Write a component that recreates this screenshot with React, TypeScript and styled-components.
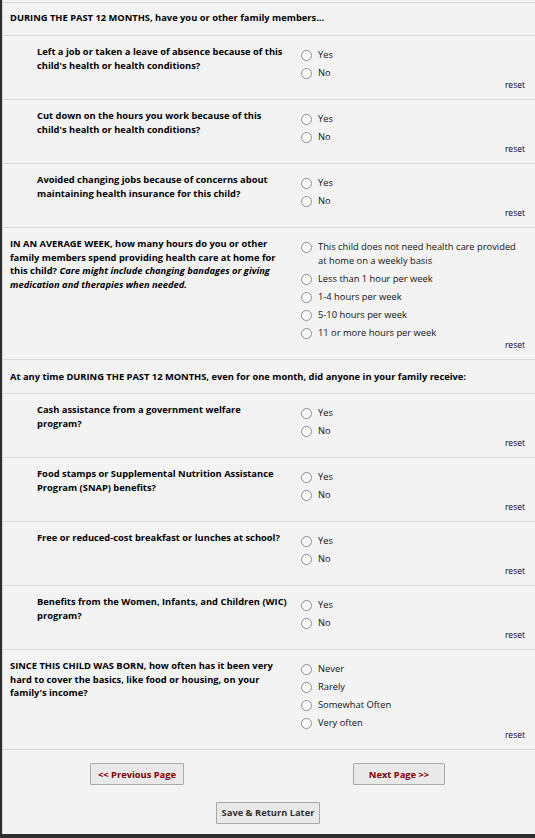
import React from "react"
import styled, { createGlobalStyle } from "styled-components"

const GlobalStyle = createGlobalStyle`
  html, body {
    margin: 0;
    padding: 0;
    background: #2d2d2d;
  }
  body {
    font-family: "Open Sans", "DejaVu Sans", sans-serif;
    color: #000;
  }
`

interface Question {
  text: React.ReactNode
  options: string[]
  indent?: boolean
}

type Item = { kind: "header"; text: React.ReactNode } | ({ kind: "question" } & Question)

const yesNo = ["Yes", "No"]

const items: Item[] = [
  {
    kind: "header",
    text: "DURING THE PAST 12 MONTHS, have you or other family members...",
  },
  {
    kind: "question",
    indent: true,
    text: "Left a job or taken a leave of absence because of this child's health or health conditions?",
    options: yesNo,
  },
  {
    kind: "question",
    indent: true,
    text: "Cut down on the hours you work because of this child's health or health conditions?",
    options: yesNo,
  },
  {
    kind: "question",
    indent: true,
    text: "Avoided changing jobs because of concerns about maintaining health insurance for this child?",
    options: yesNo,
  },
  {
    kind: "question",
    text: (
      <>
        IN AN AVERAGE WEEK, how many hours do you or other family members spend providing health
        care at home for this child?{" "}
        <i>Care might include changing bandages or giving medication and therapies when needed.</i>
      </>
    ),
    options: [
      "This child does not need health care provided at home on a weekly basis",
      "Less than 1 hour per week",
      "1-4 hours per week",
      "5-10 hours per week",
      "11 or more hours per week",
    ],
  },
  {
    kind: "header",
    text: "At any time DURING THE PAST 12 MONTHS, even for one month, did anyone in your family receive:",
  },
  {
    kind: "question",
    indent: true,
    text: "Cash assistance from a government welfare program?",
    options: yesNo,
  },
  {
    kind: "question",
    indent: true,
    text: "Food stamps or Supplemental Nutrition Assistance Program (SNAP) benefits?",
    options: yesNo,
  },
  {
    kind: "question",
    indent: true,
    text: "Free or reduced-cost breakfast or lunches at school?",
    options: yesNo,
  },
  {
    kind: "question",
    indent: true,
    text: "Benefits from the Women, Infants, and Children (WIC) program?",
    options: yesNo,
  },
  {
    kind: "question",
    text: "SINCE THIS CHILD WAS BORN, how often has it been very hard to cover the basics, like food or housing, on your family's income?",
    options: ["Never", "Rarely", "Somewhat Often", "Very often"],
  },
]

const App: React.FC = () => {
  return (
    <>
      <GlobalStyle />
      <Page>
        {items.map((item, i) =>
          item.kind === "header" ? (
            <HeaderRow key={i}>{item.text}</HeaderRow>
          ) : (
            <QuestionRow key={i}>
              <Label $indent={item.indent}>{item.text}</Label>
              <Answers>
                {item.options.map((opt) => (
                  <Choice key={opt}>
                    <Radio type="radio" name={`q${i}`} />
                    <ChoiceText>{opt}</ChoiceText>
                  </Choice>
                ))}
                <Reset href="#">reset</Reset>
              </Answers>
            </QuestionRow>
          )
        )}
        <ButtonArea>
          <Button $tone="nav">&lt;&lt; Previous Page</Button>
          <Button $tone="nav">Next Page &gt;&gt;</Button>
          <SaveCell>
            <Button $tone="plain">Save &amp; Return Later</Button>
          </SaveCell>
        </ButtonArea>
      </Page>
    </>
  )
}

export default App

const Page = styled.div`
  margin-left: 2px;
  border-left: 1px solid #d8d8d8;
  background: #f3f3f3;
  padding-top: 2px;
  height: 832px;
`

const HeaderRow = styled.div`
  border-top: 1px solid #d9d9d9;
  padding: 10px 10px 9px 7px;
  font-size: 9.33px;
  line-height: 14px;
  font-weight: 700;

  &:first-child {
    padding-top: 8px;
    padding-bottom: 10px;
  }
`

const QuestionRow = styled.div`
  display: grid;
  grid-template-columns: 288px 1fr;
  border-top: 1px solid #d9d9d9;
  padding: 9px 10px 9px 7px;
`

const Label = styled.div<{ $indent?: boolean }>`
  padding-left: ${(p) => (p.$indent ? "27px" : "0")};
  padding-right: 11px;
  font-size: 9.33px;
  line-height: 13.5px;
  font-weight: 700;
`

const Answers = styled.div`
  display: flex;
  flex-direction: column;
  padding-top: 1px;
`

const Choice = styled.label`
  display: flex;
  align-items: flex-start;
  padding: 2px 0;
  font-size: 9.33px;
  line-height: 14px;
  color: #111;
`

const Radio = styled.input`
  appearance: none;
  flex: none;
  width: 11px;
  height: 11px;
  margin: 1.5px 6px 0 3px;
  border: 1px solid #8e8e8e;
  border-radius: 50%;
  background: #fbfbfb;
  box-sizing: border-box;
`

const ChoiceText = styled.span`
  flex: 1;
`

const Reset = styled.a`
  align-self: flex-end;
  margin-top: -2px;
  font-size: 8.5px;
  line-height: 10px;
  color: #000044;
  text-decoration: none;
`

const ButtonArea = styled.div`
  display: grid;
  grid-template-columns: 268px 1fr;
  justify-items: center;
  row-gap: 14px;
  border-top: 1px solid #d9d9d9;
  padding: 13px 8px 0 0;
`

const SaveCell = styled.div`
  grid-column: 1 / -1;
  padding-left: 6px;
`

const Button = styled.button<{ $tone: "nav" | "plain" }>`
  height: 22px;
  padding: 0 ${(p) => (p.$tone === "nav" ? "7px" : "5px")};
  min-width: ${(p) => (p.$tone === "nav" ? "92px" : "0")};
  font-family: "Open Sans", "DejaVu Sans", sans-serif;
  font-size: 9.33px;
  font-weight: 700;
  color: ${(p) => (p.$tone === "nav" ? "#800000" : "#333")};
  background: #e9e9e9;
  border: 1px solid #a8a8a8;
  border-radius: 1px;
`
